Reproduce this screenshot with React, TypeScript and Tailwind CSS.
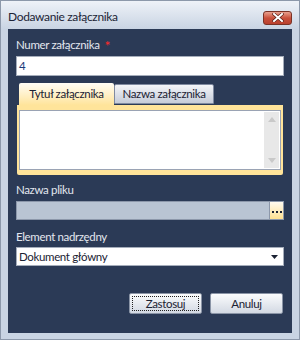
import React from "react";

const Label: React.FC<{ text: string; required?: boolean; className?: string }> = ({
  text,
  required,
  className,
}) => (
  <div className={"h-[16px] leading-[16px] text-[11.5px] tracking-[-0.35px] text-[#e3e7ef] " + (className || "")}>
    {text}
    <span className="text-[#ff2a2a] text-[14px] ml-[5px] relative top-[2px]">{required ? "*" : ""}</span>
  </div>
);

const Button: React.FC<{ text: string; focused?: boolean }> = ({ text, focused }) => (
  <div className="w-[73px] h-[21px] border border-[#8a94a6] rounded-[2px] bg-gradient-to-b from-[#fbfcfd] to-[#d3d9e3] p-[2px]">
    <div
      className={
        "w-full h-full flex items-center justify-center text-[11.5px] tracking-[-0.35px] text-[#1b2233] " +
        (focused ? "border border-dotted border-[#222]" : "")
      }
    >
      {text}
    </div>
  </div>
);

const App: React.FC = () => {
  return (
    <div className="w-[300px] h-[340px] bg-[#c9d4e3] border border-[#8c98aa] flex flex-col font-['Lato',sans-serif]">
      {/* Title bar */}
      <div className="h-[28px] shrink-0 flex items-center justify-between pl-[7px] pr-[7px] bg-gradient-to-b from-[#eef2f8] to-[#c9d4e3]">
        <span className="text-[12px] tracking-[-0.35px] text-[#1c2436] mt-[4px]">Dodawanie załącznika</span>
        <div className="w-[29px] h-[14px] mt-[5px] rounded-[3px] border border-[#7a3226] bg-gradient-to-b from-[#e8a08f] via-[#c9503c] to-[#b8402e] flex items-center justify-center">
          <svg width="12" height="9" viewBox="0 0 12 9">
            <path d="M2 1 L10 8 M10 1 L2 8" stroke="#5a1d14" strokeWidth="3.2" strokeLinecap="square" />
            <path d="M2 1 L10 8 M10 1 L2 8" stroke="#ffffff" strokeWidth="2" strokeLinecap="square" />
          </svg>
        </div>
      </div>

      {/* Content */}
      <div className="mx-[7px] h-[304px] shrink-0 bg-[#2b3a56] px-[8px] pt-[7px] flex flex-col">
        <Label text="Numer załącznika" required />
        <div className="mt-[4px] h-[20px] bg-white border border-[#a5adbb] flex items-center px-[2px] text-[11.5px] text-[#1a3a7a]">
          4
        </div>

        {/* Tabs */}
        <div className="mt-[7px] h-[22px] flex items-end pl-[3px]">
          <div className="w-[95px] h-[22px] rounded-t-[2px] bg-gradient-to-b from-[#fffdf6] to-[#ffe49a] flex items-center justify-center text-[11.5px] tracking-[-0.35px] text-[#1b2233]">
            Tytuł załącznika
          </div>
          <div className="w-[100px] h-[20px] mb-[1px] rounded-t-[2px] border border-[#7f8aa0] bg-gradient-to-b from-[#f3f5f8] to-[#c6ccd9] flex items-center justify-center text-[11.5px] tracking-[-0.35px] text-[#1b2233]">
            Nazwa załącznika
          </div>
        </div>
        <div className="ml-[1px] w-[266px] h-[70px] bg-[#ffe49a] rounded-b-[2px] px-[2px] pt-[5px] pb-[5px]">
          <div className="w-full h-full bg-white border border-[#9aa3b4] flex justify-end p-[1px]">
            <div className="w-[15px] h-full bg-[#e8e8e8] flex flex-col items-center justify-between py-[5px]">
              <svg width="8" height="5" viewBox="0 0 8 5">
                <path d="M0 5 L4 0 L8 5 Z" fill="#c9c9c9" />
              </svg>
              <svg width="8" height="5" viewBox="0 0 8 5">
                <path d="M0 0 L8 0 L4 5 Z" fill="#c9c9c9" />
              </svg>
            </div>
          </div>
        </div>

        <Label text="Nazwa pliku" className="mt-[6px]" />
        <div className="mt-[4px] h-[19px] flex border border-[#8c97aa]">
          <div className="flex-1 bg-[#b9c4d3]" />
          <div className="w-[14px] border-l border-[#8c97aa] bg-gradient-to-b from-[#fffaf0] to-[#ffe08f] flex items-end justify-center pb-[5px]">
            <svg width="10" height="3" viewBox="0 0 10 3">
              <rect x="0" y="0" width="2" height="2" fill="#1b2233" />
              <rect x="4" y="0" width="2" height="2" fill="#1b2233" />
              <rect x="8" y="0" width="2" height="2" fill="#1b2233" />
            </svg>
          </div>
        </div>

        <Label text="Element nadrzędny" className="mt-[8px]" />
        <div className="mt-[3px] h-[19px] bg-white border border-[#a5adbb] flex items-center justify-between pl-[2px] pr-[5px] text-[11.5px] tracking-[-0.35px] text-[#1b2233]">
          <span>Dokument główny</span>
          <svg width="7" height="4" viewBox="0 0 7 4">
            <path d="M0 0 L7 0 L3.5 4 Z" fill="#1b2233" />
          </svg>
        </div>

        <div className="mt-[27px] flex justify-end gap-[8px] pr-[1px]">
          <Button text="Zastosuj" focused />
          <Button text="Anuluj" />
        </div>
      </div>
    </div>
  );
};

export default App;
